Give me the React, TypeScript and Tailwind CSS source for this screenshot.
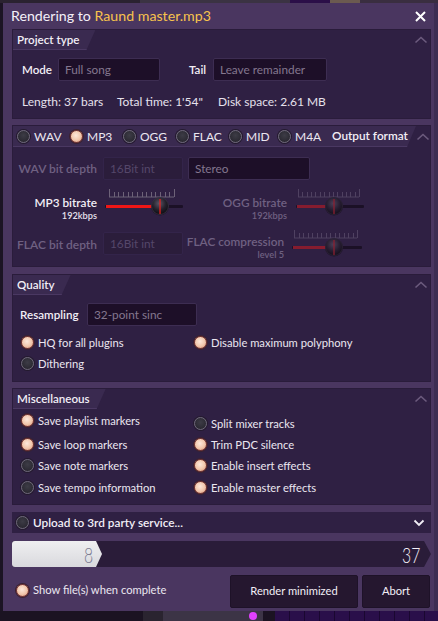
import React from "react";

const FONT = "font-['Lato','Noto_Sans',sans-serif]";

function Radio({ on }: { on?: boolean }) {
  return (
    <span
      className={
        "inline-block w-[13px] h-[13px] rounded-full shrink-0 " +
        (on
          ? "bg-[radial-gradient(circle_at_45%_40%,#fde8da_0%,#f1c6ab_55%,#c98670_100%)] border border-[#7e3b34] shadow-[0_0_0_1px_#3b2231]"
          : "bg-[radial-gradient(circle_at_50%_40%,#3d3c46_0%,#24222b_100%)] border border-[#6f6a79] shadow-[0_0_0_1px_#241a2e]")
      }
    />
  );
}

function ChevronUp() {
  return (
    <svg width="14" height="8" viewBox="0 0 14 8" className="shrink-0">
      <path d="M1.5 6.5 L7 1.5 L12.5 6.5" fill="none" stroke="#6c5b7e" strokeWidth="1.6" />
    </svg>
  );
}

function ChevronDown() {
  return (
    <svg width="12" height="8" viewBox="0 0 12 8" className="shrink-0">
      <path d="M1.5 1.5 L6 6 L10.5 1.5" fill="none" stroke="#f2eef6" strokeWidth="1.8" />
    </svg>
  );
}

function Tab({ children, className = "" }: { children: React.ReactNode; className?: string }) {
  return (
    <div
      className={
        "h-full bg-[#3a2a50] [clip-path:polygon(0_0,100%_0,calc(100%-9px)_100%,0_100%)] flex items-center pl-[4px] pr-[16px] border-b border-[#4a3862] whitespace-nowrap " +
        className
      }
    >
      {children}
    </div>
  );
}

function Input({ text, w, dim }: { text: string; w: number; dim?: boolean }) {
  return (
    <div
      style={{ width: w }}
      className={
        "h-[23px] rounded-[2px] flex items-center px-[6px] text-[11.8px] shrink-0 whitespace-nowrap " +
        (dim
          ? "bg-[#2b1d3b] border border-[#33244a] text-[#55476a]"
          : "bg-[#1d0f28] border border-[#3d2d52] text-[#84778f]")
      }
    >
      {text}
    </div>
  );
}

function Slider({
  w,
  knob,
  fill,
  bright,
  tickFrom,
  tickTo,
}: {
  w: number;
  knob: number;
  fill: number;
  bright?: boolean;
  tickFrom: number;
  tickTo: number;
}) {
  const ticks: number[] = [];
  const n = 14;
  for (let i = 0; i <= n; i++) ticks.push(tickFrom + ((tickTo - tickFrom) * i) / n);
  const gid = "k" + knob + "_" + w + (bright ? "b" : "d");
  return (
    <svg width={w} height="34" viewBox={`0 0 ${w} 34`} className="shrink-0">
      <defs>
        <radialGradient id={gid} cx="45%" cy="35%" r="65%">
          <stop offset="0%" stopColor={bright ? "#5a5566" : "#4a3f58"} />
          <stop offset="60%" stopColor={bright ? "#23202b" : "#261d31"} />
          <stop offset="100%" stopColor={bright ? "#0f0d14" : "#150f1c"} />
        </radialGradient>
      </defs>
      <line x1={tickFrom} y1="10" x2={tickTo} y2="10" stroke={bright ? "#6d6278" : "#4f4161"} strokeWidth="1" />
      {ticks.map((x, i) => (
        <line
          key={i}
          x1={Math.round(x) + 0.5}
          y1={i === 0 || i === n ? 2 : 5}
          x2={Math.round(x) + 0.5}
          y2="10"
          stroke={bright ? "#6d6278" : "#4f4161"}
          strokeWidth="1"
        />
      ))}
      <rect x="1" y="18" width={w - 2} height="3" rx="1" fill="#1b1026" />
      <rect x="2" y="18" width={fill} height="3" fill={bright ? "#ee1616" : "#861c2f"} />
      <circle cx={knob} cy="19.5" r="9" fill="#120c18" opacity="0.6" />
      <circle cx={knob} cy="19" r="8.5" fill={`url(#${gid})`} stroke={bright ? "#3a3444" : "#2d2438"} strokeWidth="0.8" />
      <line x1={knob} y1="12" x2={knob} y2="27" stroke={bright ? "#e32020" : "#8a1f30"} strokeWidth="1.3" />
    </svg>
  );
}

function RadioRow({ on, label, className = "" }: { on?: boolean; label: string; className?: string }) {
  return (
    <div className={"flex items-center gap-[4px] text-[11.2px] leading-[15px] text-[#ebe6f0] whitespace-nowrap " + className}>
      <Radio on={on} />
      <span>{label}</span>
    </div>
  );
}

export default function App() {
  return (
    <div className={`${FONT} w-[438px] h-[621px] bg-[#1b1322] flex flex-col overflow-hidden`}>
      {/* background app top strip */}
      <div className="h-[3px] flex shrink-0">
        <div className="w-[140px] bg-[#2a2230]" />
        <div className="w-[150px] bg-[#3b3343]" />
        <div className="w-[40px] bg-[#2b0f48]" />
        <div className="w-[30px] bg-[#6b5a50]" />
        <div className="flex-1 bg-[#3a2e40]" />
      </div>

      <div className="flex flex-1 min-h-0">
        <div className="w-[3px] bg-[#1c1424] shrink-0" />
        {/* dialog */}
        <div className="w-[431px] h-[608px] bg-[#4a3660] flex flex-col pl-[9px] pr-[3px] shrink-0">
          {/* title bar */}
          <div className="h-[26px] flex items-center justify-between pr-[2px] shrink-0">
            <div className="text-[14.2px] text-[#f4f0f8] -ml-[1px] whitespace-nowrap">
              Rendering to <span className="text-[#f7c24d]">Raund master.mp3</span>
            </div>
            <svg width="11" height="11" viewBox="0 0 11 11" className="mr-[3px]">
              <path d="M1 1 L10 10 M10 1 L1 10" stroke="#ffffff" strokeWidth="2" />
            </svg>
          </div>

          {/* Project type */}
          <div className="w-[419px] h-[90px] bg-[#2f2043] border border-[#2a1c3b] flex flex-col shrink-0">
            <div className="h-[20px] flex items-stretch">
              <Tab className="text-[11.6px] font-semibold text-[#f2eef6]">Project type</Tab>
              <div className="flex-1" />
              <div className="flex items-center pr-[2px]">
                <ChevronUp />
              </div>
            </div>
            <div className="flex items-center pl-[9px] mt-[8px] whitespace-nowrap">
              <span className="text-[11.6px] font-semibold text-[#f2eef6] w-[36px]">Mode</span>
              <Input text="Full song" w={102} />
              <span className="text-[11.6px] font-semibold text-[#f2eef6] ml-[29px] w-[24px]">Tail</span>
              <Input text="Leave remainder" w={114} />
            </div>
            <div className="flex items-center pl-[9px] mt-[12px] text-[12px] text-[#e6e1ec] whitespace-nowrap">
              <span className="w-[95px]">Length: 37 bars</span>
              <span className="w-[101px]">Total time: 1'54"</span>
              <span>Disk space: 2.61 MB</span>
            </div>
          </div>

          {/* Output format */}
          <div className="w-[419px] h-[142px] mt-[6px] bg-[#2f2043] border border-[#2a1c3b] flex flex-col shrink-0">
            <div className="h-[21px] flex items-stretch">
              <Tab className="w-[403px] pl-[3px]">
                <div className="flex items-center">
                  <RadioRow label="WAV" className="w-[53px] text-[12px]" />
                  <RadioRow on label="MP3" className="w-[53px] text-[12px]" />
                  <RadioRow label="OGG" className="w-[53px] text-[12px]" />
                  <RadioRow label="FLAC" className="w-[53px] text-[12px]" />
                  <RadioRow label="MID" className="w-[49px] text-[12px]" />
                  <RadioRow label="M4A" className="w-[54px] text-[12px]" />
                  <span className="font-semibold text-[11.8px] text-[#f2eef6]">Output format</span>
                </div>
              </Tab>
              <div className="flex-1" />
              <div className="flex items-center pr-[2px]">
                <ChevronUp />
              </div>
            </div>
            <div className="flex items-center mt-[10px] whitespace-nowrap">
              <span className="w-[84px] text-right text-[12px] font-semibold text-[#6f6182]">WAV bit depth</span>
              <div className="ml-[6px]">
                <Input text="16Bit int" w={80} dim />
              </div>
              <div className="ml-[5px]">
                <Input text="Stereo" w={122} />
              </div>
            </div>
            <div className="flex items-start mt-[7px] h-[36px] whitespace-nowrap">
              <div className="w-[84px] flex flex-col items-end pt-[9px]">
                <span className="text-[11.8px] font-semibold text-[#f2eef6] leading-[14px]">MP3 bitrate</span>
                <span className="text-[9.2px] font-semibold text-[#e6e1ec] leading-[12px]">192kbps</span>
              </div>
              <div className="ml-[7px]">
                <Slider w={80} knob={56} fill={46} bright tickFrom={5} tickTo={70} />
              </div>
              <div className="w-[103px] flex flex-col items-end pt-[9px]">
                <span className="text-[11.8px] font-semibold text-[#6f6182] leading-[14px]">OGG bitrate</span>
                <span className="text-[9.2px] font-semibold text-[#6f6182] leading-[12px]">192kbps</span>
              </div>
              <div className="ml-[8px]">
                <Slider w={70} knob={39} fill={34} tickFrom={3} tickTo={64} />
              </div>
            </div>
            <div className="flex items-start mt-[9px] whitespace-nowrap">
              <span className="w-[84px] text-right text-[12px] font-semibold text-[#6f6182] mt-[4px]">FLAC bit depth</span>
              <div className="ml-[6px]">
                <Input text="16Bit int" w={80} dim />
              </div>
              <div className="w-[101px] flex flex-col items-end pt-[3px]">
                <span className="text-[11.8px] font-semibold text-[#6f6182] leading-[14px]">FLAC compression</span>
                <span className="text-[9.2px] font-semibold text-[#6f6182] leading-[12px]">level 5</span>
              </div>
              <div className="ml-[7px] -mt-[4px]">
                <Slider w={72} knob={43} fill={38} tickFrom={3} tickTo={66} />
              </div>
            </div>
          </div>

          {/* Quality */}
          <div className="w-[419px] h-[108px] mt-[7px] bg-[#2f2043] border border-[#2a1c3b] flex flex-col shrink-0">
            <div className="h-[20px] flex items-stretch">
              <Tab className="text-[11.6px] font-semibold text-[#f2eef6]">Quality</Tab>
              <div className="flex-1" />
              <div className="flex items-center pr-[2px]">
                <ChevronUp />
              </div>
            </div>
            <div className="flex items-center pl-[7px] mt-[8px] whitespace-nowrap">
              <span className="text-[11.6px] font-semibold text-[#f2eef6] w-[67px]">Resampling</span>
              <Input text="32-point sinc" w={110} />
            </div>
            <div className="flex pl-[8px] mt-[9px]">
              <div className="flex flex-col gap-[6px] w-[173px]">
                <RadioRow on label="HQ for all plugins" />
                <RadioRow label="Dithering" />
              </div>
              <RadioRow on label="Disable maximum polyphony" className="self-start" />
            </div>
          </div>

          {/* Miscellaneous */}
          <div className="w-[419px] h-[117px] mt-[6px] bg-[#2f2043] border border-[#2a1c3b] flex flex-col shrink-0">
            <div className="h-[20px] flex items-stretch">
              <Tab className="text-[11.6px] font-semibold text-[#f2eef6]">Miscellaneous</Tab>
              <div className="flex-1" />
              <div className="flex items-center pr-[2px]">
                <ChevronUp />
              </div>
            </div>
            <div className="flex pl-[8px] mt-[4px]">
              <div className="flex flex-col w-[173px]">
                <RadioRow on label="Save playlist markers" className="h-[15px]" />
                <RadioRow on label="Save loop markers" className="h-[15px] mt-[9px]" />
                <RadioRow label="Save note markers" className="h-[15px] mt-[6px]" />
                <RadioRow label="Save tempo information" className="h-[15px] mt-[7px]" />
              </div>
              <div className="flex flex-col">
                <RadioRow label="Split mixer tracks" className="h-[15px] mt-[3px]" />
                <RadioRow on label="Trim PDC silence" className="h-[15px] mt-[6px]" />
                <RadioRow on label="Enable insert effects" className="h-[15px] mt-[6px]" />
                <RadioRow on label="Enable master effects" className="h-[15px] mt-[7px]" />
              </div>
            </div>
          </div>

          {/* Upload */}
          <div className="w-[419px] h-[21px] mt-[7px] bg-[#2f2043] flex items-center pl-[4px] pr-[6px] shrink-0">
            <Radio />
            <span className="ml-[4px] text-[11.8px] font-semibold text-[#f2eef6] flex-1 whitespace-nowrap">Upload to 3rd party service...</span>
            <ChevronDown />
          </div>

          {/* progress */}
          <div className="w-[419px] h-[26px] mt-[8px] bg-[#2a1c39] [clip-path:polygon(0_0,calc(100%-7px)_0,100%_50%,calc(100%-7px)_100%,0_100%)] flex items-center shrink-0 rounded-l-[2px]">
            <div className="w-[90px] h-full bg-[linear-gradient(#efeff1,#d9d9dd)] [clip-path:polygon(0_0,calc(100%-6px)_0,100%_50%,calc(100%-6px)_100%,0_100%)] flex items-center justify-end pr-[9px] rounded-l-[3px]">
              <span className="text-[21px] font-light text-[#7c7c92] leading-none scale-x-[0.75] origin-right">8</span>
            </div>
            <div className="flex-1" />
            <span className="text-[21px] font-light text-[#f4f0f8] leading-none mr-[11px] scale-x-[0.75] origin-right">37</span>
          </div>

          {/* bottom row */}
          <div className="flex items-center mt-[8px] h-[33px] shrink-0">
            <div className="flex items-center pl-[4px] flex-1 -mt-[2px] whitespace-nowrap">
              <Radio on />
              <span className="ml-[4px] text-[11.2px] text-[#ebe6f0]">Show file(s) when complete</span>
            </div>
            <button className="w-[128px] h-[33px] bg-[#25172f] border border-[#1e1228] rounded-[2px] text-[11.2px] text-[#f2eef6]">
              Render minimized
            </button>
            <button className="w-[68px] h-[33px] ml-[4px] mr-[1px] bg-[#25172f] border border-[#1e1228] rounded-[2px] text-[11.2px] text-[#f2eef6]">
              Abort
            </button>
          </div>
        </div>
        <div className="flex-1 bg-[#3d2d52]" />
      </div>

      {/* background app bottom strip */}
      <div className="h-[10px] flex shrink-0 bg-[#1b1322]">
        <div className="w-[143px]" />
        <div className="w-[20px] bg-[#2a2430]" />
        <div className="w-[100px] bg-[#3c3446] relative flex justify-end pr-[6px]">
          <span className="w-[8px] h-[8px] rounded-full bg-[#e040ff] mt-[1px]" />
        </div>
        <div className="w-[12px]" />
        <div className="flex-1 bg-[#2a0f4a] bg-[repeating-linear-gradient(90deg,#2a0f4a_0px,#2a0f4a_14px,#1a0830_14px,#1a0830_15px)]" />
      </div>
    </div>
  );
}
